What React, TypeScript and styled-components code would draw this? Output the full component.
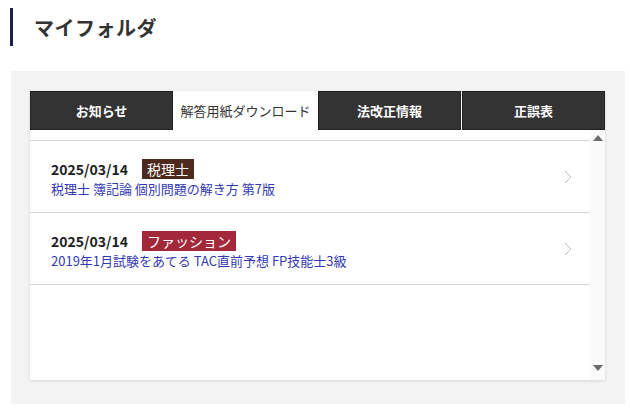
import styled, { createGlobalStyle } from 'styled-components'

const GlobalStyle = createGlobalStyle`
  body {
    margin: 0;
    background: #fff;
    font-family: 'Noto Sans CJK JP', 'Noto Sans', sans-serif;
    color: #333;
  }
`

const Page = styled.div`
  width: 630px;
  padding-top: 8px;
`

const Heading = styled.h1`
  margin: 0 0 0 10px;
  height: 38px;
  padding-left: 21px;
  border-left: 3px solid #1c1f4a;
  display: flex;
  align-items: center;
  font-size: 20px;
  font-weight: 700;
  color: #333;
  letter-spacing: 0.5px;
`

const Panel = styled.section`
  margin: 25px 5px 0 11px;
  padding: 20px 20px 24px 19px;
  background: #f3f3f3;
`

const Card = styled.div`
  background: #fff;
  box-shadow: 0 1px 3px rgba(0, 0, 0, 0.12);
`

const Tabs = styled.div`
  display: grid;
  grid-template-columns: repeat(4, 1fr);
  gap: 1px;
  height: 39px;
`

const Tab = styled.div<{ $active?: boolean }>`
  display: flex;
  align-items: center;
  justify-content: center;
  font-size: 13px;
  font-weight: ${(p) => (p.$active ? 400 : 700)};
  color: ${(p) => (p.$active ? '#333' : '#fff')};
  background: ${(p) => (p.$active ? '#fff' : '#333')};
  border: ${(p) => (p.$active ? 'none' : '1px solid #222')};
`

const Body = styled.div`
  display: flex;
  height: 250px;
`

const List = styled.ul`
  flex: 1;
  list-style: none;
  margin: 10px 0 0;
  padding: 0;
  border-top: 1px solid #d6d6d6;
`

const Item = styled.li`
  position: relative;
  height: 72px;
  padding: 18px 0 0 21px;
  box-sizing: border-box;
  border-bottom: 1px solid #d6d6d6;
`

const Meta = styled.div`
  display: flex;
  align-items: center;
  gap: 14px;
  height: 20px;
`

const Date = styled.span`
  font-size: 14px;
  font-weight: 700;
  color: #222;
`

const Tag = styled.span<{ $color: string }>`
  display: inline-flex;
  align-items: center;
  height: 20px;
  padding: 0 5px;
  font-size: 14px;
  color: #fff;
  background: ${(p) => p.$color};
`

const Title = styled.a`
  display: block;
  margin-top: 0;
  font-size: 13px;
  color: #3339b3;
  text-decoration: none;
`

const Chevron = styled.svg`
  position: absolute;
  right: 18px;
  top: 29px;
`

const Scrollbar = styled.div`
  width: 15px;
  background: #fafafa;
  display: flex;
  flex-direction: column;
  justify-content: space-between;
  align-items: center;
  padding: 5px 0 9px;
  box-sizing: border-box;
`

const Arrow = styled.span<{ $down?: boolean }>`
  width: 0;
  height: 0;
  border-left: 5px solid transparent;
  border-right: 5px solid transparent;
  ${(p) => (p.$down ? 'border-top: 6px solid #6a6a6a;' : 'border-bottom: 6px solid #6a6a6a;')}
`

const items = [
  { date: '2025/03/14', tag: '税理士', color: '#4e2a1e', title: '税理士 簿記論 個別問題の解き方 第7版' },
  { date: '2025/03/14', tag: 'ファッション', color: '#a2283a', title: '2019年1月試験をあてる TAC直前予想 FP技能士3級' },
]

export default function App() {
  return (
    <Page>
      <GlobalStyle />
      <Heading>マイフォルダ</Heading>
      <Panel>
        <Card>
          <Tabs>
            <Tab>お知らせ</Tab>
            <Tab $active>解答用紙ダウンロード</Tab>
            <Tab>法改正情報</Tab>
            <Tab>正誤表</Tab>
          </Tabs>
          <Body>
            <List>
              {items.map((it, i) => (
                <Item key={i}>
                  <Meta>
                    <Date>{it.date}</Date>
                    <Tag $color={it.color}>{it.tag}</Tag>
                  </Meta>
                  <Title href="#">{it.title}</Title>
                  <Chevron width="8" height="14" viewBox="0 0 8 14">
                    <path d="M1 1l6 6-6 6" fill="none" stroke="#bbb" strokeWidth="1" />
                  </Chevron>
                </Item>
              ))}
            </List>
            <Scrollbar>
              <Arrow />
              <Arrow $down />
            </Scrollbar>
          </Body>
        </Card>
      </Panel>
    </Page>
  )
}
